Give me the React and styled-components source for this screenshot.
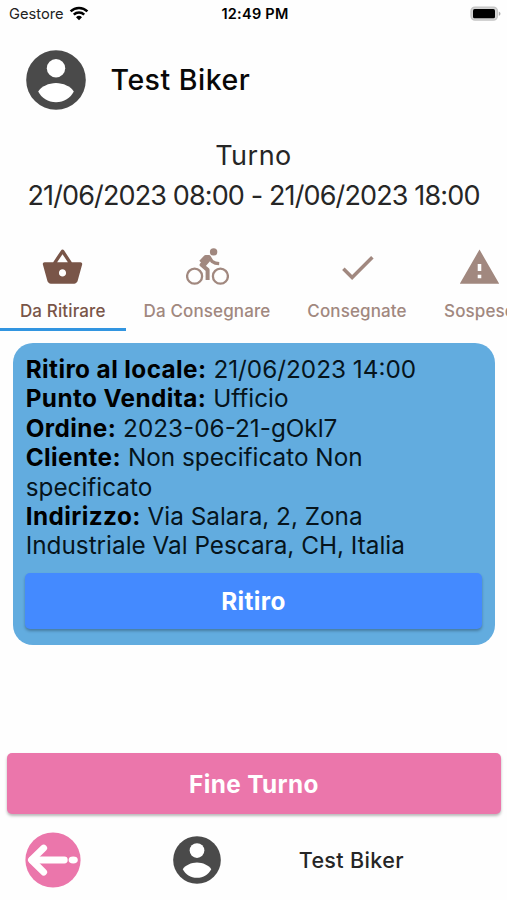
import React from "react";
import styled, { createGlobalStyle } from "styled-components";
import { MdShoppingBasket, MdCheck, MdWarning } from "react-icons/md";

const tabs = [
  { label: "Da Ritirare", icon: MdShoppingBasket, width: 125.5, active: true },
  { label: "Da Consegnare", icon: Bici, width: 163 },
  { label: "Consegnate", icon: MdCheck, width: 137 },
  { label: "Sospese", icon: MdWarning, width: 108 },
];

const ordine = [
  ["Ritiro al locale:", "21/06/2023 14:00"],
  ["Punto Vendita:", "Ufficio"],
  ["Ordine:", "2023-06-21-gOkl7"],
  ["Cliente:", "Non specificato Non specificato"],
  ["Indirizzo:", "Via Salara, 2, Zona Industriale Val Pescara, CH, Italia"],
];

export default function App() {
  return (
    <Schermo>
      <GlobalStyle />
      <StatusBar>
        <Operatore>
          Gestore
          <Wifi />
        </Operatore>
        <Ora>12:49 PM</Ora>
        <Batteria />
      </StatusBar>

      <Intestazione>
        <Avatar size={60} />
        <Nome>Test Biker</Nome>
      </Intestazione>

      <Turno>
        <TurnoTitolo>Turno</TurnoTitolo>
        <TurnoOrario>21/06/2023 08:00 - 21/06/2023 18:00</TurnoOrario>
      </Turno>

      <Tabs>
        {tabs.map(({ label, icon: Icon, width, active }) => (
          <Tab key={label} $width={width} $active={active}>
            <Icon size={43} />
            <span>{label}</span>
          </Tab>
        ))}
      </Tabs>

      <Card>
        <Dettagli>
          {ordine.map(([titolo, valore]) => (
            <p key={titolo}>
              <b>{titolo}</b> {valore}
            </p>
          ))}
        </Dettagli>
        <RitiroButton>Ritiro</RitiroButton>
      </Card>

      <FineTurnoButton>Fine Turno</FineTurnoButton>

      <Footer>
        <Indietro />
        <Avatar size={48} />
        <FooterNome>Test Biker</FooterNome>
      </Footer>
    </Schermo>
  );
}

function Wifi() {
  return (
    <svg width="20" height="15" viewBox="0 0 20 15" fill="none" stroke="#000" strokeWidth="2.5">
      <path d="M1.6 5.4a12 12 0 0 1 16.8 0" />
      <path d="M4.8 8.7a7.4 7.4 0 0 1 10.4 0" />
      <path d="M10 14.2 7 11.2a4.3 4.3 0 0 1 6 0z" fill="#000" stroke="none" />
    </svg>
  );
}

function Batteria() {
  return (
    <svg width="31" height="16" viewBox="0 0 31 16">
      <rect x="1" y="1.1" width="26.4" height="13" rx="4" fill="#d4d4d4" stroke="#c4c4c4" strokeWidth="1.3" />
      <rect x="3" y="3.1" width="22" height="9.2" rx="1.6" fill="#000" />
      <path d="M28.8 5.4c2.2.9 2.2 3.5 0 4.4z" fill="#aaa" />
    </svg>
  );
}

function Avatar({ size }) {
  return (
    <svg width={size} height={size} viewBox="0 0 60 60">
      <circle cx="30" cy="30" r="29.8" fill="#4a4a4a" />
      <circle cx="30" cy="18.2" r="9.2" fill="#fff" />
      <path
        d="M12.2 41.5C15 36.5 23 33 30 33s15 3.5 17.8 8.5C44.5 48 38 52.2 30 52.2S15.5 48 12.2 41.5z"
        fill="#fff"
      />
    </svg>
  );
}

function Bici({ size }) {
  return (
    <svg width={size} height={size} viewBox="6 3.5 43 43" fill="none" stroke="currentColor">
      <circle cx="14.6" cy="33.7" r="7.5" strokeWidth="2.3" />
      <circle cx="40.4" cy="33.7" r="7.5" strokeWidth="2.3" />
      <circle cx="33.6" cy="9.4" r="3.7" fill="currentColor" stroke="none" />
      <path d="M28 15.5 21.5 22.3 27.6 27.4V37.5" strokeWidth="4" strokeLinejoin="round" />
      <path d="M20.5 19.5 25.5 14.2H29L32 18.8C34 20.2 36 21 39.2 21.2" strokeWidth="3.3" strokeLinejoin="round" />
      <path d="m21.5 22 5-7.5 4.5 3-6 7z" fill="currentColor" stroke="none" />
    </svg>
  );
}

function Indietro() {
  return (
    <svg width="56" height="56" viewBox="0 0 56 56">
      <circle cx="28" cy="28" r="27.6" fill="#eb76ab" />
      <g fill="none" stroke="#fff" strokeWidth="6.8" strokeLinecap="round" strokeLinejoin="round">
        <path d="M18.7 16 6.4 28l12.3 12.2" />
        <path d="M7 28h32.3" />
      </g>
      <ellipse cx="48.2" cy="28" rx="4.6" ry="3.4" fill="#fff" />
    </svg>
  );
}

const GlobalStyle = createGlobalStyle`
  body {
    margin: 0;
    background: #fff;
    font-family: Inter, "Liberation Sans", sans-serif;
  }
`;

const Schermo = styled.div`
  width: 507px;
  height: 900px;
  display: flex;
  flex-direction: column;
  overflow: hidden;
  background: #fefefe;
  color: #000;

  > * {
    flex-shrink: 0;
  }
`;

const StatusBar = styled.div`
  display: grid;
  grid-template-columns: 1fr auto 1fr;
  align-items: center;
  height: 27px;
  padding: 0 6px 0 9px;
  font-size: 14.7px;

  > svg {
    justify-self: end;
  }
`;

const Operatore = styled.div`
  display: flex;
  align-items: center;
  gap: 5px;
  color: #222;
`;

const Ora = styled.div`
  font-weight: 600;
  font-size: 14.5px;
  letter-spacing: 0.25px;
`;

const Intestazione = styled.div`
  display: flex;
  align-items: center;
  height: 106.5px;
  padding-left: 26px;
  gap: 24.5px;
`;

const Nome = styled.div`
  padding-bottom: 1px;
  color: #080808;
  font-size: 28.5px;
  font-weight: 500;
  letter-spacing: 0.5px;
`;

const Turno = styled.div`
  display: flex;
  flex-direction: column;
  align-items: center;
  height: 99px;
  padding-top: 2px;
  color: #262626;
  font-size: 27px;
  line-height: 40px;
  white-space: nowrap;
`;

const TurnoTitolo = styled.div`
  letter-spacing: 0.5px;
`;

const TurnoOrario = styled.div`
  letter-spacing: -0.87px;
`;

const Tabs = styled.div`
  display: flex;
  height: 96px;
`;

const Tab = styled.div`
  box-sizing: border-box;
  flex: 0 0 ${(p) => p.$width}px;
  display: flex;
  flex-direction: column;
  align-items: center;
  gap: 10px;
  padding-top: 11.5px;
  border-bottom: 3px solid ${(p) => (p.$active ? "#3295e0" : "transparent")};
  color: ${(p) => (p.$active ? "#795548" : "#a1887f")};
  font-size: 17px;
  font-weight: 500;
  line-height: 24px;
  letter-spacing: 0.12px;
  white-space: nowrap;
`;

const Card = styled.div`
  box-sizing: border-box;
  height: 302px;
  margin: 12.5px 12.5px 0 13px;
  padding: 12px;
  border-radius: 20px;
  background: #62acdf;
`;

const Dettagli = styled.div`
  max-width: 400px;
  padding-left: 0.7px;
  color: #06141c;
  font-size: 24.3px;
  line-height: 29.4px;

  p {
    margin: 0;
  }

  b {
    color: #000;
    font-weight: 700;
    letter-spacing: 0.42px;
  }
`;

const Bottone = styled.button`
  display: block;
  border: 0;
  border-radius: 5px;
  color: #fff;
  font-family: inherit;
  font-size: 24.3px;
  font-weight: 700;
  letter-spacing: 0.4px;
  box-shadow: 0 2px 3px rgba(0, 0, 0, 0.28);
`;

const RitiroButton = styled(Bottone)`
  width: 457px;
  height: 56px;
  margin-top: 12px;
  background: #448aff;
`;

const FineTurnoButton = styled(Bottone)`
  height: 61px;
  margin: 108px 6px 0 7px;
  background: #eb76ab;
`;

const Footer = styled.div`
  display: flex;
  align-items: center;
  height: 91.5px;
  padding-left: 24.7px;

  > svg:nth-child(2) {
    margin-left: 92.5px;
  }
`;

const FooterNome = styled.div`
  margin-left: 77.5px;
  color: #262626;
  font-size: 21.5px;
  font-weight: 500;
  letter-spacing: 0.35px;
`;
